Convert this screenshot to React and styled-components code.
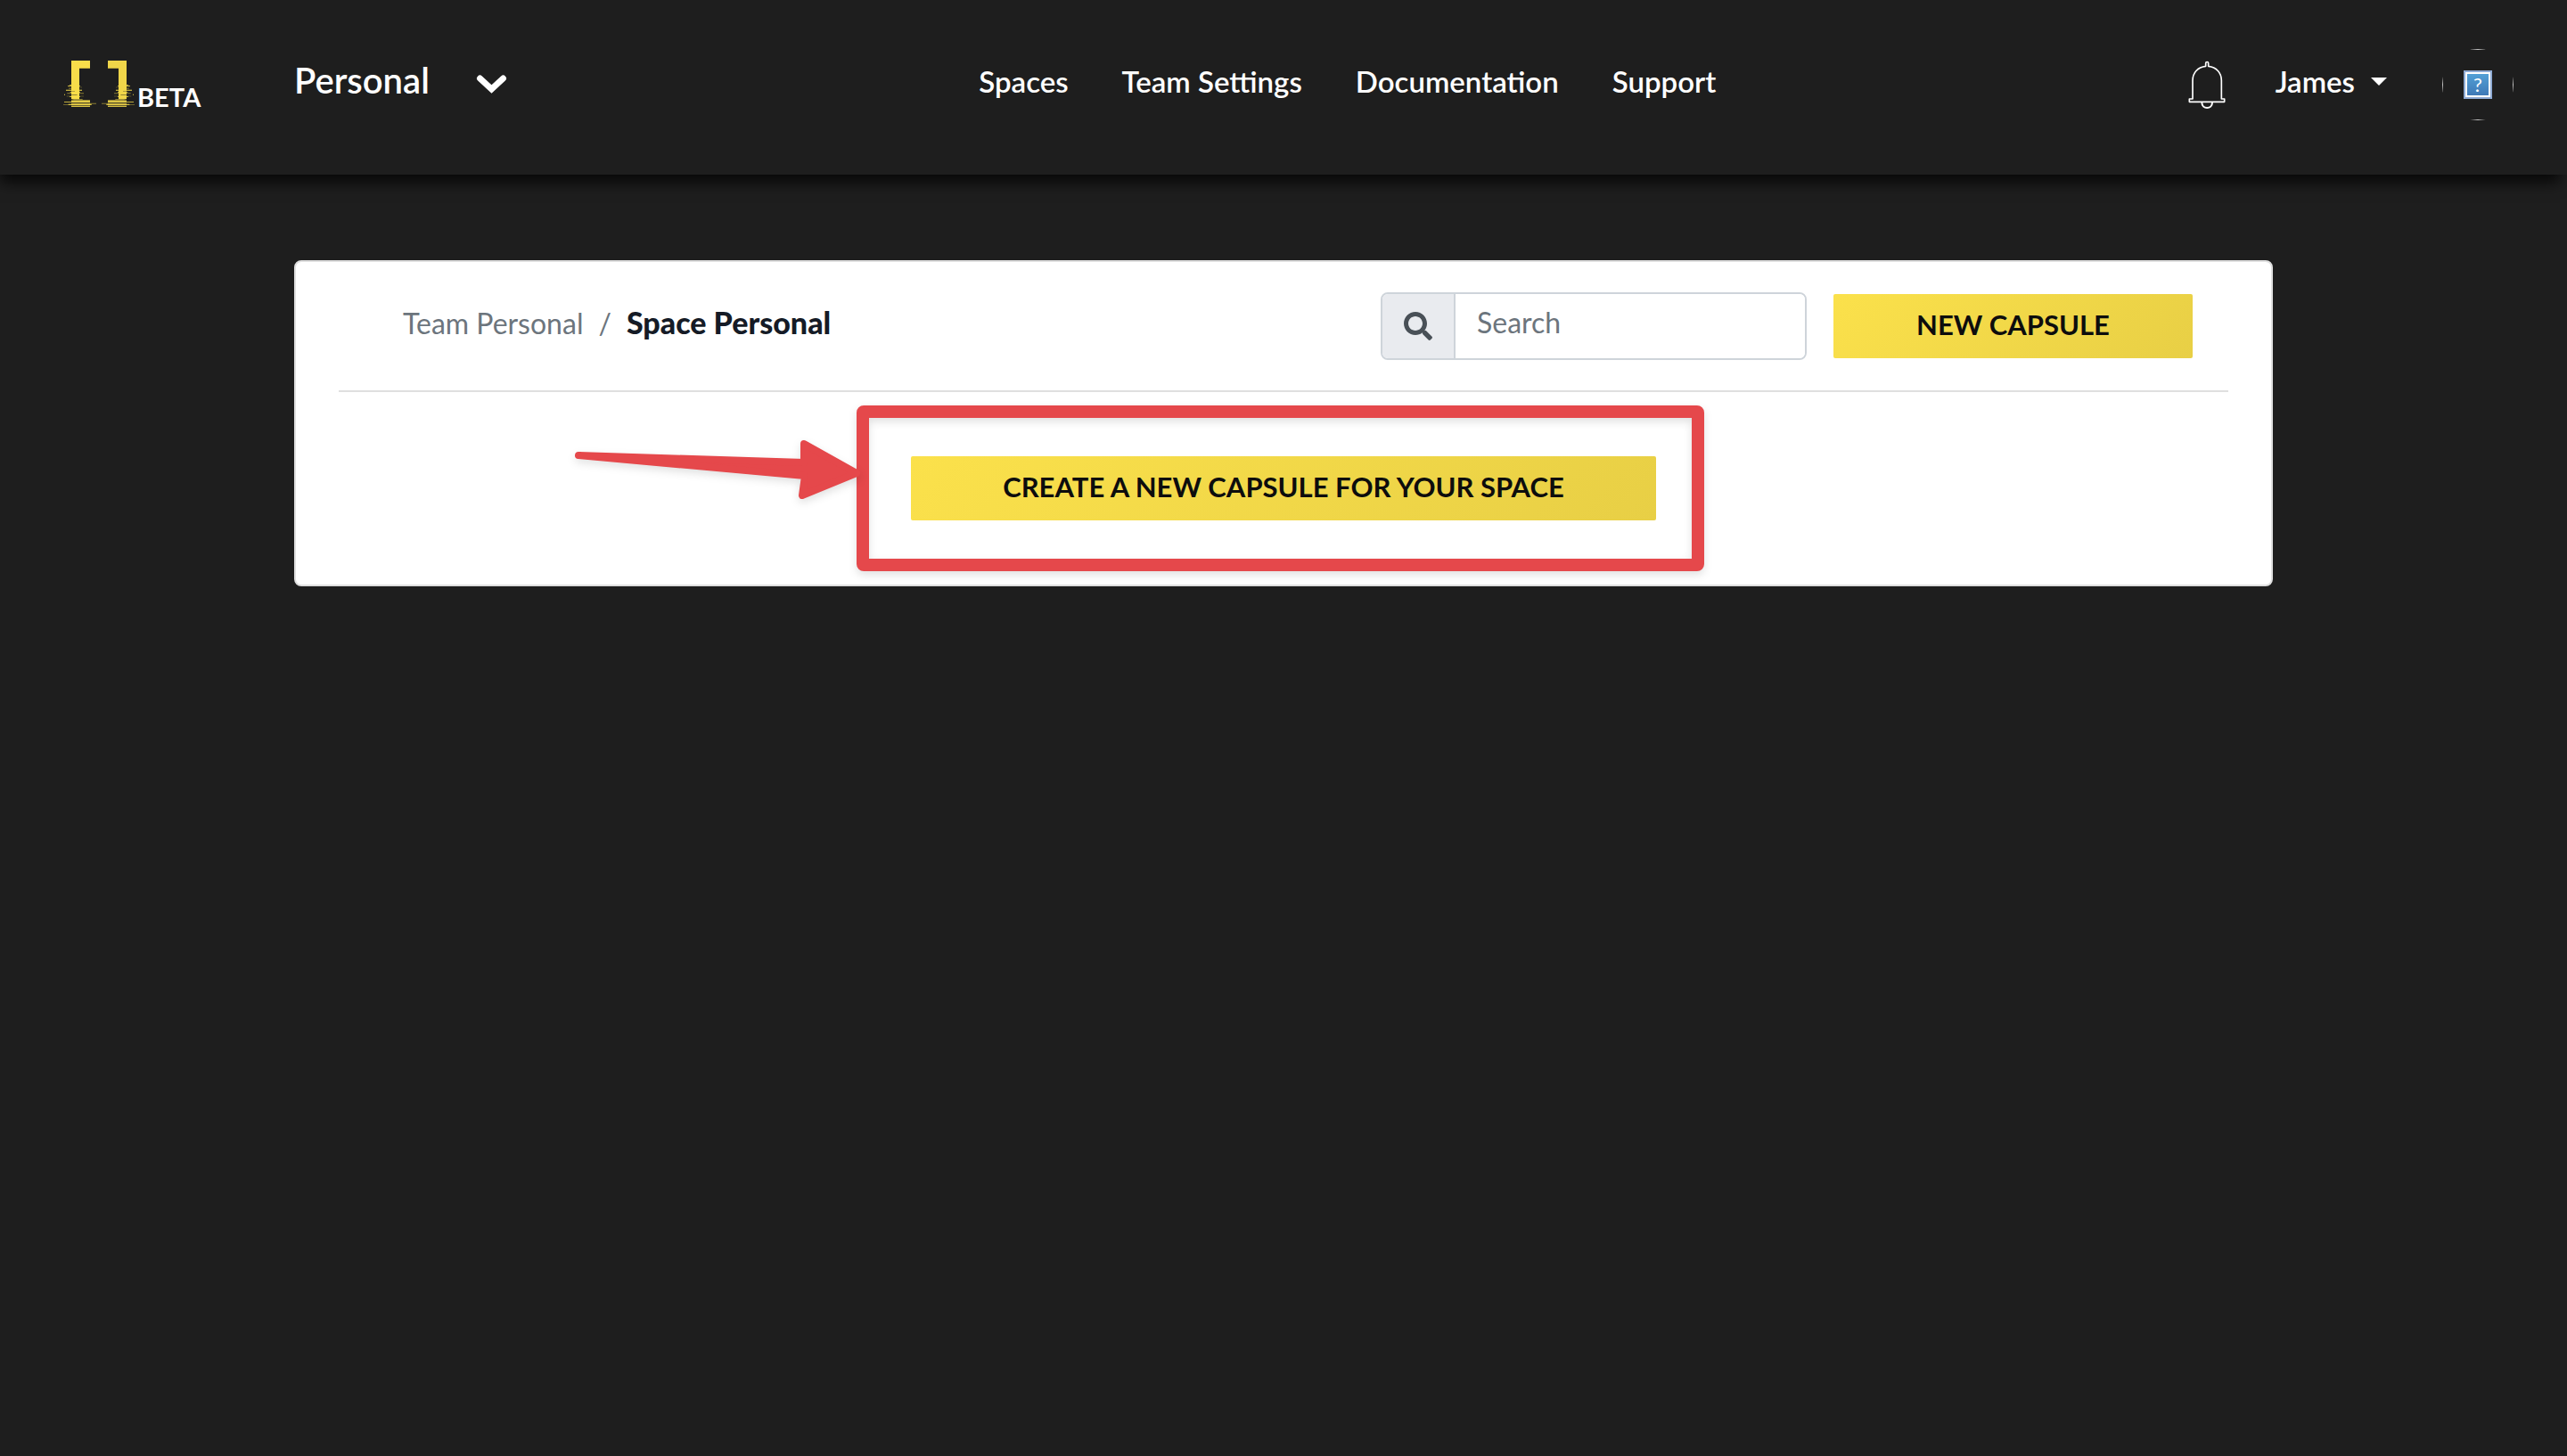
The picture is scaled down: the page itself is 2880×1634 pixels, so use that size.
import React from "react";
import styled, { createGlobalStyle } from "styled-components";
import { FaSearch } from "react-icons/fa";

const GlobalStyle = createGlobalStyle`
  *, *::before, *::after {
    box-sizing: border-box;
  }
  body {
    margin: 0;
    min-height: 100vh;
    background: #1e1e1e;
    color: #ffffff;
    font-family: Lato, "Liberation Sans", sans-serif;
    font-size: 32px;
    line-height: 40px;
  }
  button, input {
    font: inherit;
  }
`;

const Header = styled.header`
  display: flex;
  align-items: center;
  padding: 55px 60px 61px 70px;
  background: #1e1e1e;
  box-shadow: -4px 12px 16px -4px rgba(0, 0, 0, 0.8);
`;

const Brand = styled.a`
  display: flex;
  flex: 0 0 260px;
  align-items: baseline;
  gap: 2px;
  color: #ffffff;
  font-size: 29px;
  font-weight: 700;
  line-height: 30px;
  text-decoration: none;
`;

const PlainButton = styled.button`
  display: flex;
  align-items: center;
  padding: 0;
  border: 0;
  background: none;
  color: inherit;
  cursor: pointer;
`;

const TeamButton = styled(PlainButton)`
  gap: 52px;
  padding-bottom: 2px;
  font-size: 40px;
  font-weight: 600;
  line-height: 48px;

  span {
    padding-bottom: 8px;
  }
`;

const Nav = styled.nav`
  display: flex;
  flex: 1;
  justify-content: center;
  gap: 60px;
  padding-bottom: 8px;
`;

const NavLink = styled.a`
  color: #ffffff;
  font-size: 33px;
  font-weight: 600;
  text-decoration: none;
`;

const UserArea = styled.div`
  display: flex;
  align-items: center;
`;

const UserButton = styled(PlainButton)`
  gap: 18px;
  margin: 0 62px 0 56px;
  padding-bottom: 8px;
  font-size: 33px;
  font-weight: 600;
`;

const Caret = styled.span`
  border: 9px solid transparent;
  border-top-color: #ffffff;
  border-bottom: 0;
`;

const Avatar = styled.span`
  display: grid;
  width: 80px;
  height: 80px;
  border-radius: 50%;
  overflow: hidden;
`;

const AvatarFrame = styled.span`
  display: grid;
  place-items: center;
  border: 1px solid #c8c8c8;
`;

const MissingImage = styled.span`
  display: grid;
  place-items: center;
  width: 32px;
  height: 32px;
  border: 2px solid #8fabd4;
  background: linear-gradient(#54a3d8, #3d76b4);
  box-shadow: inset 0 0 0 2px #ffffff;
  font-size: 22px;
  line-height: 24px;
`;

const Main = styled.main`
  padding: 96px 32px;
`;

const Card = styled.section`
  max-width: 2220px;
  margin: 0 auto;
  padding: 0 48px;
  border: 2px solid #dfdfdf;
  border-radius: 8px;
  background: #ffffff;
`;

const Toolbar = styled.div`
  display: flex;
  align-items: center;
  gap: 30px;
  padding: 34px 40px 34px 72px;
  border-bottom: 2px solid #dfdfdf;
`;

const Breadcrumb = styled.nav`
  display: flex;
  flex: 1;
  align-items: baseline;
  gap: 17px;
  padding-bottom: 8px;
  color: #6c757d;
`;

const CrumbLink = styled.a`
  color: inherit;
  text-decoration: none;
`;

const CurrentCrumb = styled.span`
  color: #151b26;
  font-size: 34px;
  font-weight: 900;
`;

const SearchGroup = styled.div`
  display: flex;
  width: 478px;
  height: 76px;
  border: 2px solid #ced4da;
  border-radius: 8px;
  overflow: hidden;
`;

const SearchLabel = styled.label`
  display: grid;
  flex: 0 0 82px;
  place-items: center;
  border-right: 2px solid #ced4da;
  background: #e9ebef;
  color: #495057;
`;

const SearchInput = styled.input`
  flex: 1;
  min-width: 0;
  padding: 0 24px 8px;
  border: 0;
  outline: 0;
  background: #ffffff;
  color: #495057;

  &::placeholder {
    color: #6c757d;
    opacity: 1;
  }
`;

const CapsuleButton = styled.button`
  min-width: ${(p) => p.$minWidth};
  height: 72px;
  padding: 0 32px 4px;
  border: 0;
  border-radius: 2px;
  background: linear-gradient(135deg, #fbe14b, #e8cf45);
  color: #0d0d0d;
  font-size: 31px;
  font-weight: 700;
  text-transform: uppercase;
  cursor: pointer;
`;

const EmptyState = styled.div`
  display: flex;
  justify-content: center;
  padding: 72px 0;
`;

const Highlighted = styled.div`
  position: relative;
`;

const HighlightFrame = styled.div`
  position: absolute;
  inset: -57px -54px -57px -61px;
  border: 14px solid #e5484b;
  border-radius: 8px;
  filter: drop-shadow(0 4px 5px rgba(0, 0, 0, 0.12));
  pointer-events: none;
`;

const HighlightArrow = styled.svg`
  position: absolute;
  top: -28px;
  right: calc(100% + 56px);
  width: 324px;
  height: 80px;
  overflow: visible;
  filter: drop-shadow(0 4px 5px rgba(0, 0, 0, 0.12));
  pointer-events: none;
`;

const BracketHalf = () => (
  <>
    <path d="M90 85h63v26h-36v104h-27z" />
    <path d="M84 166h6v2h-6zM78 170h42v2h-42zM72 183h54v3h-54zM86 190h34v2h-34zM84 205h36v2h-36zM66 198h3v3h-3zM96 209h20v4h-20z" />
    <path opacity=".5" d="M80 174h46v2h-46zM76 194h56v3h-56zM74 204h58v2h-58zM82 178h10v2h-10zM94 214h34v3h-34z" />
    <path opacity=".65" d="M90 218h63v22h-63z" />
    <path d="M90 219h63v3h-63zM66 223h87v2h-87zM80 231h78v3h-78zM90 238h63v2h-63z" />
    <path opacity=".5" d="M63 232h95v2h-95zM150 228h24v3h-24z" />
    <path fill="#1e1e1e" opacity=".6" d="M90 188h12v1h-12zM90 200h20v2h-20zM90 226h63v3h-63zM90 235h63v2h-63zM84 216h14v2h-14z" />
  </>
);

const LogoMark = () => (
  <svg width="82" height="53" viewBox="60 82 246 159" aria-hidden="true">
    <g fill="#f8dd4a">
      <BracketHalf />
    </g>
    <g fill="#f0d649" transform="translate(366 0) scale(-1 1)">
      <BracketHalf />
    </g>
  </svg>
);

const ChevronIcon = () => (
  <svg width="35" height="22" viewBox="0 0 35 22" aria-hidden="true">
    <path d="M4.500 5 17.500 17 30.500 5" fill="none" stroke="#fff" strokeWidth="7" strokeLinecap="round" />
  </svg>
);

const BellIcon = () => (
  <svg width="42" height="54" viewBox="104 113 126 162" fill="none" stroke="#fff" strokeWidth="5" strokeLinejoin="round" aria-hidden="true">
    <path d="M163 132v-10a4.500 4.500 0 0 1 9 0v10c27 3 44 22 44 48v62h10v10H108v-10h11v-62c0-26 17-45 44-48z" />
    <path d="M150 254c0 24 35 24 35 0" strokeWidth="6" />
  </svg>
);

const navItems = ["Spaces", "Team Settings", "Documentation", "Support"];

export default function App() {
  return (
    <>
      <GlobalStyle />
      <Header>
        <Brand href="#">
          <LogoMark />
          <span>BETA</span>
        </Brand>
        <TeamButton type="button">
          <span>Personal</span>
          <ChevronIcon />
        </TeamButton>
        <Nav>
          {navItems.map((item) => (
            <NavLink href="#" key={item}>{item}</NavLink>
          ))}
        </Nav>
        <UserArea>
          <PlainButton type="button" aria-label="Notifications">
            <BellIcon />
          </PlainButton>
          <UserButton type="button">
            James
            <Caret />
          </UserButton>
          <Avatar>
            <AvatarFrame>
              <MissingImage>?</MissingImage>
            </AvatarFrame>
          </Avatar>
        </UserArea>
      </Header>
      <Main>
        <Card>
          <Toolbar>
            <Breadcrumb>
              <CrumbLink href="#">Team Personal</CrumbLink>
              <span>/</span>
              <CurrentCrumb>Space Personal</CurrentCrumb>
            </Breadcrumb>
            <SearchGroup>
              <SearchLabel htmlFor="capsule-search" aria-label="Search">
                <FaSearch size={32} />
              </SearchLabel>
              <SearchInput id="capsule-search" type="text" placeholder="Search" />
            </SearchGroup>
            <CapsuleButton type="button" $minWidth="403px">New Capsule</CapsuleButton>
          </Toolbar>
          <EmptyState>
            <Highlighted>
              <CapsuleButton type="button" $minWidth="836px">
                Create a new capsule for your space
              </CapsuleButton>
              <HighlightFrame />
              <HighlightArrow viewBox="642 484 324 80" aria-hidden="true">
                <path
                  d="M649 511 902 519 902 498 961 531 900 556 903 534z"
                  fill="#e5484b"
                  stroke="#e5484b"
                  strokeWidth="8"
                  strokeLinejoin="round"
                />
              </HighlightArrow>
            </Highlighted>
          </EmptyState>
        </Card>
      </Main>
    </>
  );
}
